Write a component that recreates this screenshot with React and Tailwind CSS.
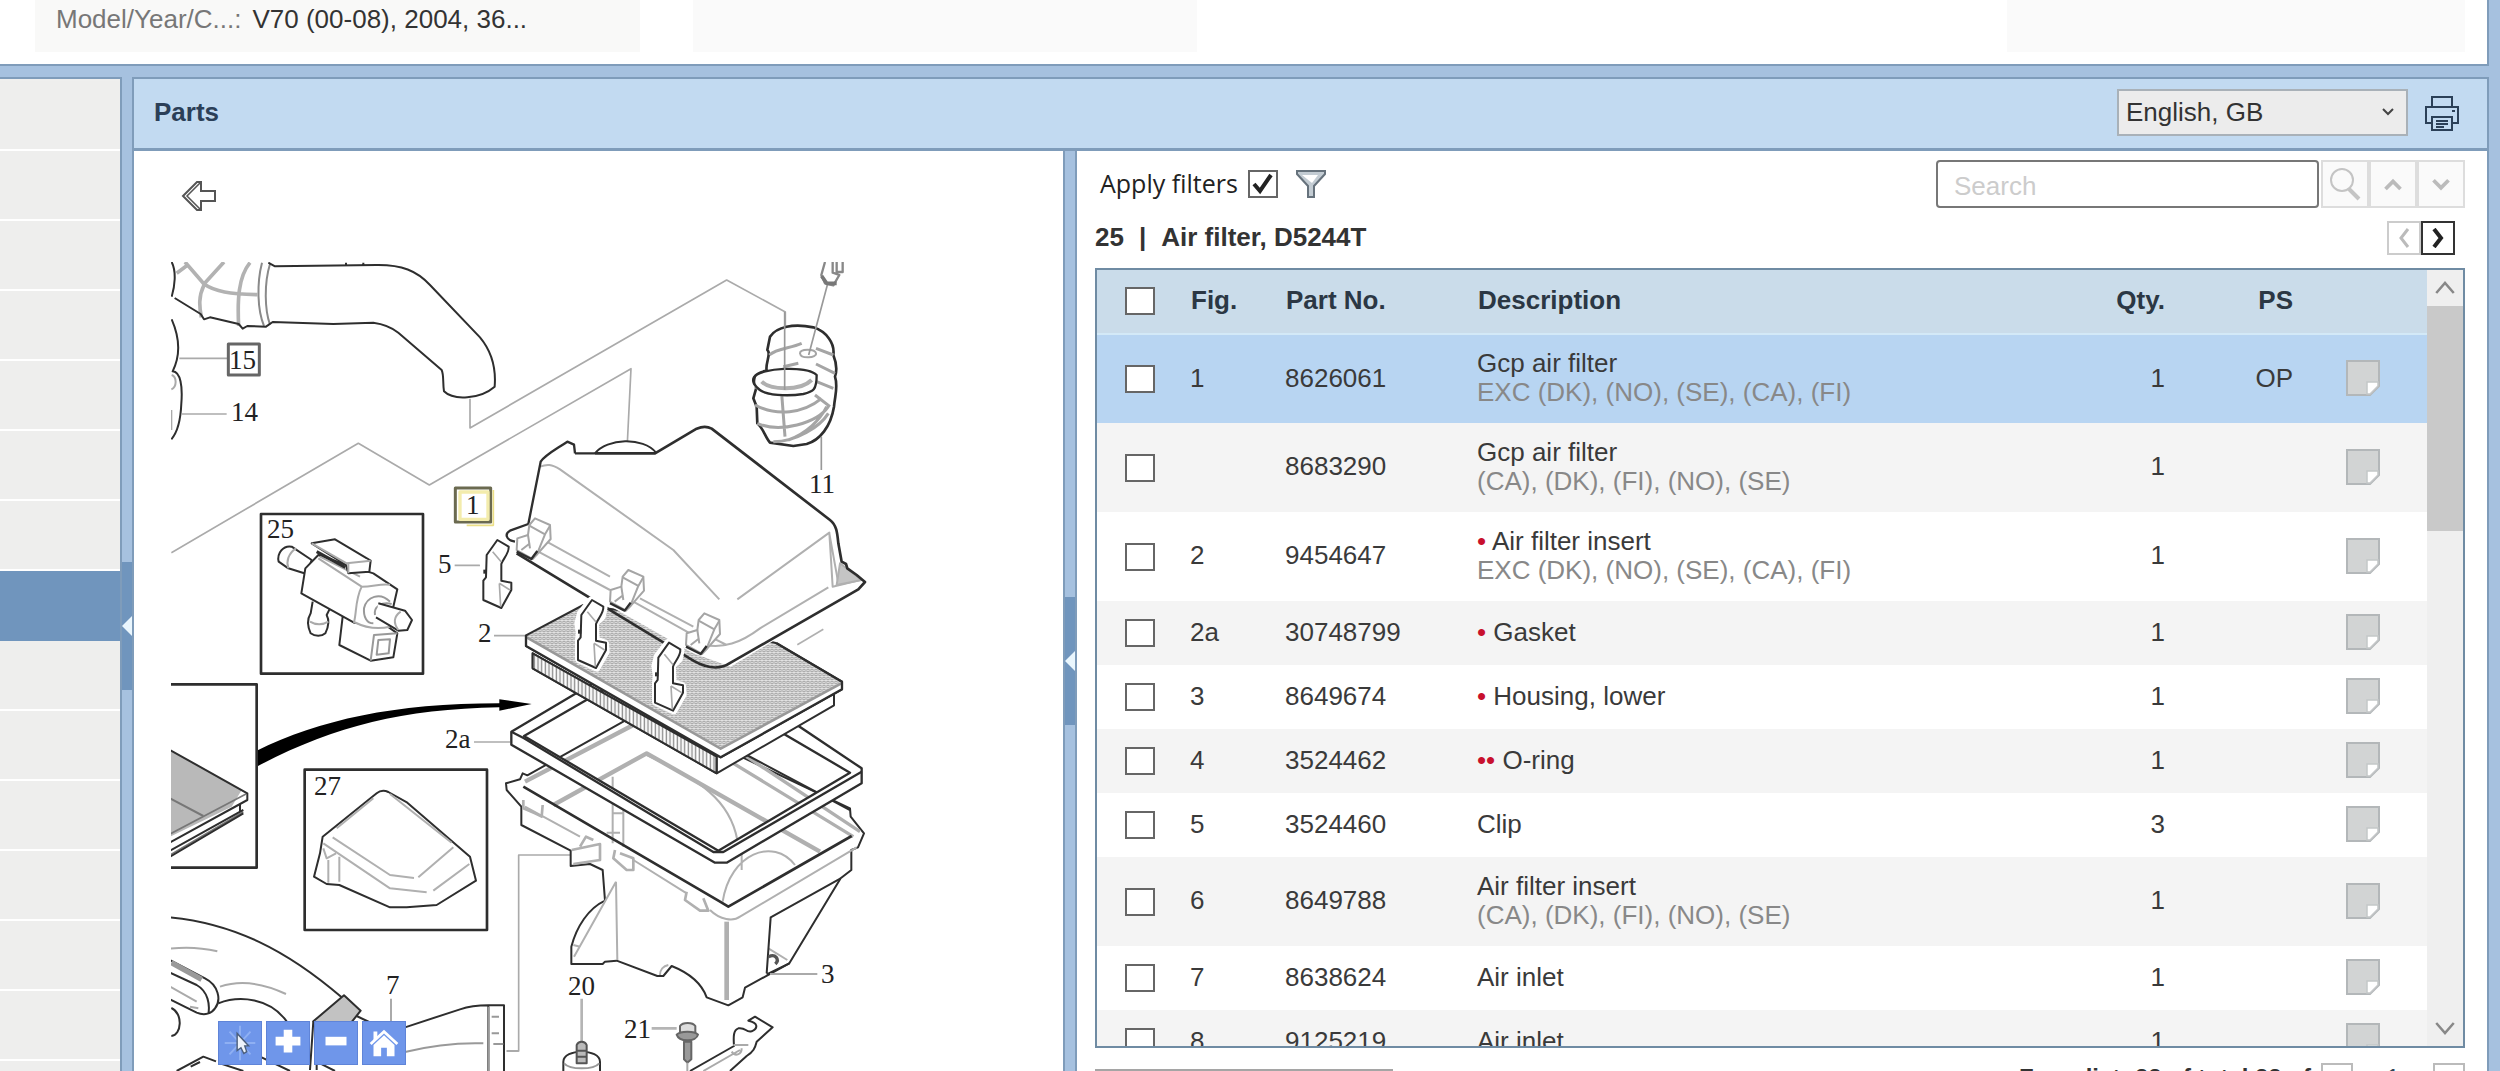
import { useState } from "react";

const PARTS = [
  { fig: "1", no: "8626061", name: "Gcp air filter", note: "EXC (DK), (NO), (SE), (CA), (FI)", qty: 1, ps: "OP" },
  { fig: "", no: "8683290", name: "Gcp air filter", note: "(CA), (DK), (FI), (NO), (SE)", qty: 1 },
  { fig: "2", no: "9454647", level: "•", name: "Air filter insert", note: "EXC (DK), (NO), (SE), (CA), (FI)", qty: 1 },
  { fig: "2a", no: "30748799", level: "•", name: "Gasket", qty: 1 },
  { fig: "3", no: "8649674", level: "•", name: "Housing, lower", qty: 1 },
  { fig: "4", no: "3524462", level: "••", name: "O-ring", qty: 1 },
  { fig: "5", no: "3524460", name: "Clip", qty: 3 },
  { fig: "6", no: "8649788", name: "Air filter insert", note: "(CA), (DK), (FI), (NO), (SE)", qty: 1 },
  { fig: "7", no: "8638624", name: "Air inlet", qty: 1 },
  { fig: "8", no: "9125219", name: "Air inlet", qty: 1 },
];

const LABELS = [
  ["15", 229, 369],
  ["14", 231, 421],
  ["25", 267, 538],
  ["1", 466, 514],
  ["5", 438, 573],
  ["2", 478, 642],
  ["11", 809, 493],
  ["2a", 445, 748],
  ["27", 314, 795],
  ["7", 386, 994],
  ["20", 568, 995],
  ["21", 624, 1038],
  ["3", 821, 983],
];

const SIDE_ROWS = Array.from({ length: 15 }, (_, i) => i);
const SELECTED_ROW = 7;

function Checkbox({ label, defaultChecked }) {
  return (
    <span className="relative inline-grid h-7 w-[30px] align-middle">
      <input
        type="checkbox"
        aria-label={label}
        defaultChecked={defaultChecked}
        className="peer h-7 w-[30px] appearance-none border-2 border-[#666] bg-white"
      />
      <svg
        viewBox="0 0 30 28"
        className="pointer-events-none absolute inset-0 hidden h-7 w-[30px] peer-checked:block"
        fill="none"
        stroke="#222"
        strokeWidth="4"
      >
        <path d="M6 14l6 7L23 5" />
      </svg>
    </span>
  );
}

function Chevron({ className, d = "M3 8l5-5 5 5", stroke = "currentColor", width = 3 }) {
  return (
    <svg viewBox="0 0 16 12" className={className} fill="none" stroke={stroke} strokeWidth={width}>
      <path d={d} />
    </svg>
  );
}

function NoteIcon() {
  return (
    <svg viewBox="0 0 34 36" className="block h-9 w-[34px]">
      <path d="M1 1h32v25l-9 9H1z" fill="#d2d4d4" stroke="#b3b7b9" strokeWidth="2" />
      <path d="M21 34V22h11v4l-8 8z" fill="#fff" stroke="#c4c7c8" strokeWidth="1.5" />
    </svg>
  );
}

function Splitter({ handleTop, handleHeight }) {
  return (
    <div className="w-[14px] shrink-0 border-x-2 border-[#7f9cba] bg-[#a6c1df]">
      <button
        aria-label="Collapse panel"
        className="flex w-full items-center justify-center bg-[#7095bd]"
        style={{ marginTop: handleTop, height: handleHeight }}
      >
        <svg viewBox="0 0 10 20" className="h-5 w-[10px]">
          <path d="M10 0v20L0 10z" fill="#eaf6fd" />
        </svg>
      </button>
    </div>
  );
}

function Clip({ x, y }) {
  return (
    <g transform={`translate(${x} ${y})`}>
      <path
        d="M0 70L8 40L40 0L78 22L72 50L52 68L54 120L82 130L84 155L56 204L2 178L2 122L4 98z"
        fill="#fff"
        stroke="#fff"
        strokeWidth="22"
      />
      <path d="M10 45L42 0L76 20C78 40 58 58 54 72L54 122L84 128L84 150L54 204L0 180L0 122L8 112z" fill="#fff" />
      <path d="M28 35L54 66M48 130L52 200M48 130L80 150" stroke="#aaa" strokeWidth="5" />
      <path d="M0 95h10" strokeWidth="12" />
    </g>
  );
}

function Diagram() {
  return (
    <svg
      viewBox="171 262 892 809"
      className="mt-[51px] h-[809px] w-[892px] shrink-0"
      fill="none"
      stroke="#2e2e2e"
      strokeWidth="6"
      strokeLinejoin="round"
    >
      <defs>
        <pattern id="mesh" width="12" height="12" patternUnits="userSpaceOnUse">
          <path d="M0 0h12v12H0z" fill="#e2e2e2" stroke="none" />
          <path d="M0 3l6 4l6-4M0 9l6 4l6-4" stroke="#a2a2a2" strokeWidth="3" />
        </pattern>
        <pattern id="pleats" width="11" height="20" patternUnits="userSpaceOnUse">
          <path d="M0 0h11v20H0z" fill="#fff" stroke="none" />
          <path d="M4 0v20" stroke="#888" strokeWidth="4" />
        </pattern>
      </defs>

      {/* inlet hose, labels 14 and 15, valve 25 */}
      <g transform="translate(160 240) scale(.33333)">
        <g stroke="#b2b2b2" strokeWidth="11">
          <path d="M75 66L132 132C165 155 210 162 292 164M132 132L192 66M50 100L82 76M132 135C115 170 118 200 124 232M270 68C235 110 232 180 236 258" />
        </g>
        <g stroke="#8a8a8a" strokeWidth="6">
          <path d="M306 68C290 130 292 210 312 258M330 72C312 130 314 210 330 254" />
        </g>
        <path d="M35 66C50 95 44 140 35 170M44 174L122 222L132 238L150 232L236 252L248 266L262 258L318 260L338 246L520 252L640 248C670 252 695 262 715 278L845 390C852 405 848 430 852 454C880 482 960 478 1004 440C1008 390 1000 340 960 292L810 135C770 92 725 74 650 75L345 79L325 68M558 68v10M610 68v10" />
        <path d="M35 238C62 300 60 350 38 394C62 396 68 440 64 490C62 540 50 580 34 598" />
        <path d="M35 405C50 410 52 440 34 448M34 510v60" stroke="#aaa" />
        <g stroke="#aaa" strokeWidth="5">
          <path d="M58 355H203M66 522H200M930 476V564L1700 120L1876 216V260M34 938L595 610L808 735L1413 386L1402 610M884 976H972M1002 1187H1098" />
        </g>
        <path d="M205 312H298V405H205z" stroke="#666" strokeWidth="9" />
        <path d="M886 744H992V846H886z" fill="#fff" stroke="#6b6a50" strokeWidth="9" />
        <path d="M900 756H984V838H900z" stroke="#f3ecac" strokeWidth="10" />
        <path d="M1000 750V856H920" stroke="#ecdf86" strokeWidth="5" />
        <path d="M303 822H789V1301H303z" strokeWidth="8" />
        <g fill="#fff">
          <path d="M455 960L395 920C370 915 350 940 356 965L385 985L440 1002z" />
          <path d="M408 925C385 940 378 965 385 985" stroke="#aaa" />
          <path d="M458 1085L452 1120C440 1140 445 1165 452 1180C465 1190 485 1190 496 1180C506 1160 508 1140 500 1125L510 1105" />
          <path d="M450 1145C465 1155 490 1155 505 1145" stroke="#aaa" />
          <path d="M548 1130L538 1215L632 1262L700 1252L712 1180L655 1140z" />
          <path d="M632 1262L642 1185L712 1180M655 1200L690 1198L686 1240L650 1244z" stroke="#999" />
          <path d="M424 1060L436 985L475 945L560 975L640 1000L712 1048L700 1100L690 1160L582 1148z" />
          <path d="M475 955L605 1040C640 1040 660 1030 690 1034M605 1040C585 1080 590 1120 582 1146C610 1160 650 1170 690 1160M480 950L600 1010" stroke="#aaa" />
          <path d="M455 910L525 898L632 962L628 995L565 1000L558 975z" />
          <path d="M455 910L560 970L632 962M565 970v30" stroke="#aaa" />
          <path d="M470 935L556 982" strokeWidth="9" />
          <path d="M690 1085C660 1055 620 1070 612 1105C610 1130 620 1150 640 1150M695 1092C665 1085 640 1100 645 1125" stroke="#999" />
          <path d="M655 1090L735 1112L756 1140L742 1170L715 1172L648 1132" />
          <path d="M722 1115C700 1130 700 1150 715 1170" stroke="#aaa" />
        </g>
      </g>

      {/* housing lower and gasket */}
      <g transform="translate(500 640) scale(.33333)">
        <path d="M210 645H56V1233H20" stroke="#aaa" strokeWidth="5" />
        <path
          d="M18 430L60 418L68 400L82 406L375 242L660 320L1050 505L1052 530L1092 580L1074 622L1054 630V690L1022 715L868 970L735 1043L728 1072L685 1096L620 1072C605 1030 570 1000 515 978L490 1008L472 1008L350 962L315 965L308 972H214L214 920C230 860 265 805 315 782L308 690L270 672L212 678V632L64 555V500L20 450z"
          fill="#fff"
        />
        <g stroke="#b0b0b0" strokeWidth="6">
          <path d="M75 425L400 255M160 495L440 340L960 635" strokeWidth="13" />
          <path d="M440 345C600 420 690 480 712 600M668 785C690 640 820 590 885 675M725 640v50M338 410V610M370 500V620M340 520h30M320 578h40" />
          <path d="M700 370L1060 590M740 350L1080 575" strokeWidth="10" />
          <path d="M75 500L240 590M400 660L560 760M630 810C660 840 700 845 720 830L1070 622" />
          <path d="M70 480L70 505L105 520L125 530L128 495M215 630L300 612V660L220 672M345 630L340 655L380 690L400 690V655L360 640M560 755L555 780L600 812L625 812L610 775M240 620L258 590L280 600" strokeWidth="8" />
          <path d="M348 725L352 960M348 725L222 950M220 915L240 920M480 1005C480 990 490 978 505 975" />
          <path d="M680 845V1080" strokeWidth="14" />
          <path d="M805 925L862 960" />
        </g>
        <path d="M70 440L655 782L685 800L1055 588" strokeWidth="8" />
        <path d="M800 1000L812 832L1022 715M868 970L800 1003" />
        <path d="M806 950c20-10 34 8 20 22" strokeWidth="10" stroke="#555" />
        <path d="M810 1002H952" stroke="#aaa" />
        <path d="M740 345L1050 510" />
        <path
          d="M34 275L360 82L660 100L1085 385V430L680 668H645L34 314zM72 288L655 632L1050 398L660 170L380 110z"
          fill="#fff"
          fillRule="evenodd"
          strokeWidth="7"
        />
        <path d="M34 275L72 295L640 636H670L1085 395" strokeWidth="7" />
      </g>

      {/* filter element with pleats */}
      <g transform="translate(500 640) scale(.33333)">
        <path d="M98 40L650 350L1002 160V196L650 400L98 85z" fill="#fff" />
        <path d="M98 40L650 350V400L98 85z" fill="url(#pleats)" />
        <path d="M78 -14L250 -105L560 -60L830 10L1026 125V148L662 352L78 18z" fill="url(#mesh)" />
        <path d="M80 -8L662 322L1024 130V148L662 352L80 18z" fill="#fff" stroke="none" />
        <path d="M80 -8L662 326L1024 130" stroke="#999" strokeWidth="8" />
        <path d="M650 352V400" />
        <path d="M78 -14V18L662 352L1026 148V125L830 10" strokeWidth="7" />
      </g>

      {/* upper housing, elbow 11 */}
      <g transform="translate(460 240) scale(.33333)">
        <path d="M405 640C440 595 550 590 588 638" fill="#fff" />
        <path
          d="M240 668C255 645 285 630 322 605L342 614L348 640H585L710 566C725 560 740 558 755 566L1110 840C1130 855 1132 880 1135 910L1145 965L1215 1026L1195 1048L812 1280L700 1240L170 940L165 905L140 895C135 875 160 860 205 852z"
          fill="#fff"
          stroke="none"
        />
        <g stroke="#b0b0b0">
          <path d="M240 680C260 672 275 672 300 688L640 930L778 1078M832 1078L1108 878L1118 1040L1200 1020M1108 880L1135 1030M235 935L260 905L450 1010M235 935L450 1050M520 1085L690 1180M540 1075L700 1160M735 1215C790 1225 840 1210 900 1165L1105 1042M750 1190L800 1215" />
          <path d="M1140 970L1205 1020L1130 1035z" fill="#c4c4c4" />
          <path d="M1012 1214L1090 1168" strokeWidth="5" />
        </g>
        <path d="M405 640H585L710 566C725 560 740 558 755 566L1110 840C1130 855 1132 880 1135 910L1145 965L1158 972L1162 985L1190 1005L1215 1026L1195 1048L812 1268C780 1290 740 1285 700 1262L170 940" strokeWidth="8" />
        <path d="M345 640L342 614L322 605C285 630 255 645 242 665L205 852L150 872C135 880 135 900 165 905M345 640H405" strokeWidth="7" />
        {[
          [170, 835],
          [450, 990],
          [678, 1120],
        ].map(([x, y]) => (
          <g key={x} transform={`translate(${x} ${y})`}>
            <path d="M38 20L55 0L100 20L102 62L58 112L48 122L0 95L2 60L34 50z" fill="#fff" stroke="#a5a5a5" />
            <path d="M38 22L85 48L60 110M34 50L40 90M85 48L100 22M14 95L40 75" stroke="#a5a5a5" />
            <path d="M0 100L44 122L62 98" strokeWidth="7" />
          </g>
        ))}

        <path d="M930 290C950 260 1000 250 1060 262C1100 275 1125 310 1120 345C1130 370 1132 390 1125 410C1135 440 1125 465 1122 500C1112 560 1080 600 1040 612L1000 618L930 608C915 590 910 565 892 550L890 500L880 475L890 440C870 420 880 400 920 392C915 370 935 340 922 330z" fill="#fff" strokeWidth="8" />
        <g stroke="#a5a5a5" strokeWidth="9">
          <path d="M928 345C950 325 990 325 1025 310M970 380L1015 370M1068 325L1120 345M1068 372L1125 400M1070 425L1120 445M1065 465L1110 500M885 440C930 475 1010 470 1065 440M885 495C950 530 1030 520 1085 475M892 550C960 580 1070 550 1105 500M940 605C1010 605 1080 560 1105 520M985 600C1040 580 1080 540 1100 500M965 460L975 590" />
          <path d="M1020 340c0-14 45-14 48 0s-45 18-48 0z" strokeWidth="6" />
        </g>
        <path d="M885 410C900 385 1040 375 1070 405C1070 450 1060 455 1030 462C980 470 920 465 900 450C885 440 878 430 885 410z" fill="#fff" strokeWidth="7" />
        <path d="M905 425C930 450 1020 455 1055 420" stroke="#b0b0b0" strokeWidth="12" />
        <path d="M974 215V450M1102 135L1046 345M1084 590V690" stroke="#999" strokeWidth="5" />
        <path d="M1095 66L1084 105L1095 130L1120 136L1138 105L1118 98V66M1130 66v30h18V66" stroke="#888" strokeWidth="7" />
        <path d="M1085 108L1100 130L1130 130" stroke="#777" strokeWidth="11" />
      </g>
      <g transform="translate(460 240) scale(.33333)">
        <Clip x={70} y={900} />
        <Clip x={354} y={1080} />
        <Clip x={585} y={1208} />
      </g>

      {/* left inset, arrow, cover 27, intake pipes */}
      <g transform="translate(160 640) scale(.33333)">
        <path d="M290 332C480 240 700 190 1018 190V178L1115 192L1018 212V202C720 208 520 260 290 380z" fill="#000" stroke="none" />
        <path d="M30 330L245 450L215 500L30 590z" fill="#b9b9b9" stroke="none" />
        <path d="M30 475L130 528" stroke="#777" strokeWidth="6" />
        <path d="M30 582L258 462M30 645L250 515" stroke="#777" strokeWidth="5" />
        <path d="M30 330L262 460V480L30 607M240 490V515M30 632L250 510M30 650L250 520" />
        <path d="M30 133H290V683H30" strokeWidth="8" />
        <path d="M434 389H981V870H434z" strokeWidth="8" />
        <path d="M488 590L650 460C662 450 672 450 685 456L742 488L930 650L948 722L830 795L740 802L690 802L538 735L500 732L462 710L480 640z" fill="#fff" />
        <path d="M518 592L690 705L762 714M775 712L880 622M490 610L690 745L800 757M820 752L928 672M690 462L875 608M530 565L640 475M490 625L500 655L528 640M505 660V728M538 650V725" stroke="#b0b0b0" />
        <path d="M942 306H1050" stroke="#aaa" strokeWidth="5" />
        <path d="M30 832C220 850 380 930 545 1072M175 1090C240 1065 330 1075 380 1144" />
        <path d="M30 926C80 920 130 924 172 934M180 1040C240 1020 310 1030 378 1062" stroke="#aaa" strokeWidth="6" />
        <path d="M30 960L135 1015C175 1035 185 1080 165 1105C155 1120 135 1128 110 1118L30 1078M30 998L110 1035C145 1055 150 1095 145 1122" />
        <path d="M34 968L125 1018" stroke="#999" strokeWidth="16" />
        <path d="M30 1040L110 1085M90 1100L115 1105" stroke="#aaa" />
        <path d="M34 1104C70 1120 65 1185 34 1188" />
        <path d="M552 1066L602 1112L540 1190L460 1144z" fill="#c2c2c2" />
        <path d="M460 1144L450 1290M470 1150V1290M590 1128L640 1152M480 1270L525 1293" />
        <path d="M735 1162L900 1108C930 1098 960 1096 985 1096H1032V1300M985 1096V1300" />
        <path d="M735 1236C820 1215 900 1208 970 1210M1000 1212H1030M986 1100V1293M995 1130h22M995 1180h22" stroke="#999" strokeWidth="6" />
        <path d="M693 1076V1145M1040 1233H1076" stroke="#aaa" strokeWidth="6" />
        <path d="M50 1293L130 1250L168 1264M92 1280L120 1266M180 1270L250 1293M300 1250L390 1293" />
      </g>

      {/* bolts and bracket */}
      <g transform="translate(500 640) scale(.33333)">
        <path d="M245 1076V1205M455 1165H530" stroke="#b5b5b5" strokeWidth="8" />
        <path d="M190 1300V1265C190 1225 300 1225 300 1265V1300" fill="#fff" />
        <path d="M192 1270C210 1290 280 1290 298 1270" stroke="#999" />
        <path d="M230 1270V1215C235 1202 255 1202 260 1215V1270z" fill="#bbb" stroke="#555" />
        <path d="M230 1232h30M230 1250h30" stroke="#555" />
        <g stroke="#666">
          <path d="M540 1180V1158C548 1146 578 1146 586 1158V1180z" fill="#ddd" />
          <path d="M530 1184C540 1172 585 1172 594 1184C590 1205 538 1208 530 1184z" fill="#999" />
          <path d="M552 1205V1258L562 1268L574 1258V1205z" fill="#999" />
          <path d="M562 1268V1293" stroke="#aaa" />
        </g>
        <path d="M570 1293L702 1218C700 1190 700 1170 715 1165C740 1162 735 1178 755 1174C775 1165 775 1148 745 1142L765 1130L818 1162L770 1205C765 1225 760 1235 740 1248L690 1293" />
        <path d="M610 1293L720 1230M700 1215L745 1215M695 1235c10 15 30 10 30-10" stroke="#aaa" />
      </g>

      <g fill="#222" stroke="none" fontFamily="'Liberation Serif', serif" fontSize="27">
        {LABELS.map(([text, x, y]) => (
          <text key={text} x={x} y={y}>
            {text}
          </text>
        ))}
      </g>
    </svg>
  );
}

const TOOL = "flex size-11 items-center justify-center border border-[#5f84d8] bg-[#6f96ea]";

function DiagramTools() {
  return (
    <div className="absolute bottom-[6px] left-[84px] flex gap-1">
      <button aria-label="Pointer" className={TOOL}>
        <svg viewBox="0 0 44 44" className="size-11">
          <path d="M22 4v36M6 22h32M11 10l22 24M33 10L11 34" stroke="#8fb0f3" strokeWidth="2" />
          <path d="M19 12v18l4-3 3 6 3-2-2-6h4z" fill="#eef3fb" stroke="#4c5f7c" strokeWidth="1.5" />
        </svg>
      </button>
      <button aria-label="Zoom in" className={TOOL}>
        <svg viewBox="0 0 44 44" className="size-11">
          <path d="M22 8v24M9 20h26" stroke="#fff" strokeWidth="9" />
        </svg>
      </button>
      <button aria-label="Zoom out" className={TOOL}>
        <svg viewBox="0 0 44 44" className="size-11">
          <path d="M11 20h22" stroke="#fff" strokeWidth="9" />
        </svg>
      </button>
      <button aria-label="Home" className={TOOL}>
        <svg viewBox="0 0 44 44" className="size-11" fill="#fff">
          <path d="M22 8l15 14-2 2-13-12L9 24l-2-2z" />
          <path d="M11 10h4v6l-4 4z" />
          <path d="M22 14l11 10v12h-8v-9h-6v9h-8V24z" />
        </svg>
      </button>
    </div>
  );
}

function PartsTable() {
  return (
    <div className="mt-[13px] flex min-h-0 flex-1 overflow-hidden border-2 border-[#6f8ba3]">
      <div className="min-w-0 flex-1">
        <table className="w-full table-fixed border-collapse text-left text-[26px] leading-[29px] text-[#3a3a3a]">
          <colgroup>
            <col className="w-[93px]" />
            <col className="w-[95px]" />
            <col className="w-[192px]" />
            <col />
            <col className="w-[120px]" />
            <col className="w-[128px]" />
            <col className="w-[134px]" />
          </colgroup>
          <thead>
            <tr className="h-[64px] border-b-2 border-[#d3e9f7] bg-[#cadcea] text-[#2b3744]">
              <th className="pb-1 pl-7">
                <Checkbox label="Select all" />
              </th>
              <th className="pb-0.5 pl-px">Fig.</th>
              <th className="pb-0.5 pl-px">Part No.</th>
              <th className="pb-0.5 pl-px">Description</th>
              <th className="pb-0.5 text-right">Qty.</th>
              <th className="pb-0.5 text-right">PS</th>
              <th aria-label="Notes" />
            </tr>
          </thead>
          <tbody>
            {PARTS.map((p, i) => (
              <tr
                key={p.no}
                className={`${p.note ? "h-[89px]" : "h-16"} ${
                  i === 0 ? "bg-[#b8d5f2]" : i % 2 ? "bg-[#f4f4f4]" : "bg-white"
                }`}
              >
                <td className="pb-0.5 pl-7">
                  <Checkbox label={`Select ${p.no}`} />
                </td>
                <td className="pb-0.5">{p.fig}</td>
                <td className="pb-0.5">{p.no}</td>
                <td className="pb-0.5">
                  <div>
                    {p.level && <span className="text-[#c8102e]">{p.level} </span>}
                    {p.name}
                  </div>
                  {p.note && <div className="text-[#888]">{p.note}</div>}
                </td>
                <td className="pb-0.5 text-right">{p.qty}</td>
                <td className="pb-0.5 text-right">{p.ps}</td>
                <td className="pb-0.5 pl-[53px]">
                  <NoteIcon />
                </td>
              </tr>
            ))}
          </tbody>
        </table>
      </div>
      <div className="flex w-9 shrink-0 flex-col bg-[#efefef]">
        <div className="flex h-9 items-center justify-center">
          <Chevron className="h-4 w-5 text-[#888]" d="M1 10l7-8 7 8" width={2} />
        </div>
        <div className="h-[225px] bg-[#c9c9c9]" />
        <div className="mt-auto flex h-9 items-center justify-center">
          <Chevron className="h-4 w-5 text-[#888]" d="M1 2l7 8 7-8" width={2} />
        </div>
      </div>
    </div>
  );
}

export default function App() {
  const [lang, setLang] = useState("en");

  return (
    <div className="flex h-screen flex-col overflow-hidden bg-[#a6c1df] pr-[11px] font-['Liberation_Sans',Arial,sans-serif] text-[#333]">
      <header className="flex h-[66px] shrink-0 items-start border-r-2 border-b-2 border-[#7f9cba] bg-white pl-[35px]">
        <div className="h-[52px] w-[605px] bg-[#f9f9f8] pt-1 pl-[21px] text-[26px] leading-[30px]">
          <span className="text-[#777]">Model/Year/C...:</span>
          <span className="pl-[11px]">V70 (00-08), 2004, 36...</span>
        </div>
        <div className="ml-[53px] h-[52px] w-[504px] bg-[#fafafa]" />
        <div className="mr-[22px] ml-auto h-[52px] w-[458px] bg-[#fafafa]" />
      </header>

      <main className="mt-[11px] flex min-h-0 flex-1">
        <nav className="w-[120px] shrink-0 overflow-hidden border-t-2 border-[#7f9cba] bg-[#efefee] pt-0.5">
          {SIDE_ROWS.map((i) => (
            <div
              key={i}
              className={`h-[70px] border-b-2 ${
                i === SELECTED_ROW ? "border-[#7095bd] bg-[#7095bd]" : "border-white bg-[#eeeeed]"
              }`}
            />
          ))}
        </nav>
        <Splitter handleTop={485} handleHeight={128} />

        <section className="flex min-w-0 flex-1 flex-col border-t-2 border-r-2 border-[#7f9cba]">
          <div className="flex h-[72px] shrink-0 items-center border-b-[3px] border-[#7f9cba] bg-[#c2daf1] pr-[27px] pb-0.5 pl-5">
            <h1 className="text-[26px] font-bold text-[#2b3f58]">Parts</h1>
            <div className="relative ml-auto w-[291px]">
              <select
                aria-label="Language"
                value={lang}
                onChange={(e) => setLang(e.target.value)}
                className="h-[47px] w-full appearance-none border-2 border-[#a9b1b8] bg-[#ececec] pb-0.5 pl-[7px] text-[26px] leading-[30px]"
              >
                <option value="en">English, GB</option>
                <option value="sv">Svenska</option>
              </select>
              <Chevron
                className="pointer-events-none absolute top-[17px] right-3 h-3 w-4 text-[#444]"
                d="M3 3l5 5 5-5"
                width={2}
              />
            </div>
            <button aria-label="Print" className="ml-4">
              <svg viewBox="0 0 36 36" className="size-9" fill="none" stroke="#2b4058" strokeWidth="2">
                <path d="M8 12V2h20v10M8 28H2V12h32v16h-6" />
                <path d="M8 22h20v13H8z" />
                <path d="M12 26h12M12 29h12M12 32h8M28 16h3" />
              </svg>
            </button>
          </div>

          <div className="grid min-h-0 flex-1 grid-cols-[minmax(0,929fr)_14px_minmax(0,1410fr)] grid-rows-[minmax(0,1fr)]">
            <div className="relative flex flex-col items-start overflow-hidden bg-white pl-[37px]">
              <button aria-label="Back" className="mt-[30px] ml-[10px] h-[30px]">
                <svg viewBox="0 0 36 30" className="h-[30px] w-9" fill="#fff" stroke="#555" strokeWidth="2">
                  <path d="M2 15L16 1h4v9h14v10H20v9h-4z" />
                  <path d="M19 2L6 15l13 13" fill="none" strokeWidth="1.5" />
                </svg>
              </button>
              <Diagram />
              <DiagramTools />
            </div>
            <Splitter handleTop={446} handleHeight={128} />

            <div className="flex min-h-0 flex-col bg-white pt-[9px] pr-[22px] pl-[18px]">
              <div className="flex h-12 shrink-0 items-center">
                <label className="flex items-center gap-[10px] pl-[5px] font-['Open_Sans',sans-serif] text-[25px] text-[#222]">
                  Apply filters
                  <Checkbox label="Apply filters" defaultChecked />
                </label>
                <svg viewBox="0 0 30 28" className="ml-[18px] h-7 w-[30px]">
                  <path d="M1 1h28v3L18 16v11h-6V16L1 4z" fill="#c3ccd3" stroke="#66727c" strokeWidth="2" />
                  <path d="M6 5h16l-6 8z" fill="#fff" />
                </svg>
                <input
                  type="text"
                  aria-label="Search"
                  placeholder="Search"
                  className="ml-auto h-12 w-[383px] rounded-[4px] border-2 border-[#777] pt-1 pl-4 text-[26px] placeholder:text-[#ccc]"
                />
                <div className="ml-[2px] flex h-12 text-[#bbb]">
                  <button aria-label="Find" className="flex w-12 items-center justify-center border-2 border-[#ddd] bg-[#fafafa]">
                    <svg viewBox="0 0 32 34" className="h-[34px] w-8" fill="none" stroke="#c4c4c4">
                      <circle cx="13" cy="13" r="11" strokeWidth="2" />
                      <path d="M20 22l10 10" strokeWidth="4" />
                    </svg>
                  </button>
                  <button aria-label="Previous hit" className="flex w-12 items-center justify-center border-2 border-[#ddd] bg-[#fafafa]">
                    <Chevron className="h-4 w-5" d="M2 10l6-6 6 6" />
                  </button>
                  <button aria-label="Next hit" className="flex w-12 items-center justify-center border-2 border-[#ddd] bg-[#fafafa]">
                    <Chevron className="h-4 w-5" d="M2 3l6 6 6-6" />
                  </button>
                </div>
              </div>

              <div className="mt-[13px] flex h-[34px] shrink-0 items-center pr-[10px]">
                <h2 className="flex gap-[15px] pb-0.5 text-[26px] font-bold">
                  <span>25</span>
                  <span>|</span>
                  <span>Air filter, D5244T</span>
                </h2>
                <div className="ml-auto flex h-[34px]">
                  <button aria-label="Previous page" className="flex w-[34px] items-center justify-center border-2 border-[#ccc] bg-white">
                    <svg viewBox="0 0 14 20" className="h-5 w-[14px]" fill="none" stroke="#bbb" strokeWidth="3">
                      <path d="M11 1L4 10l7 9" />
                    </svg>
                  </button>
                  <button aria-label="Next page" className="flex w-[34px] items-center justify-center border-2 border-[#333] bg-white">
                    <svg viewBox="0 0 14 20" className="h-5 w-[14px]" fill="none" stroke="#222" strokeWidth="4">
                      <path d="M3 1l7 9-7 9" />
                    </svg>
                  </button>
                </div>
              </div>

              <PartsTable />

              <div className="flex h-[23px] shrink-0 items-start overflow-hidden pt-[15px]">
                <div className="mt-[6px] h-8 w-[298px] bg-[#a5a5a5]" />
                <span className="mr-[10px] ml-auto text-[24px] leading-[29px] font-bold">Form list: 22 of total 22 of</span>
                <button aria-label="First" className="h-8 w-8 border-2 border-[#bbb] bg-white" />
                <span className="w-20 text-center text-[24px] leading-[29px] text-[#345]">1</span>
                <button aria-label="Last" className="h-8 w-8 border-2 border-[#bbb] bg-white" />
              </div>
            </div>
          </div>
        </section>
      </main>
    </div>
  );
}
